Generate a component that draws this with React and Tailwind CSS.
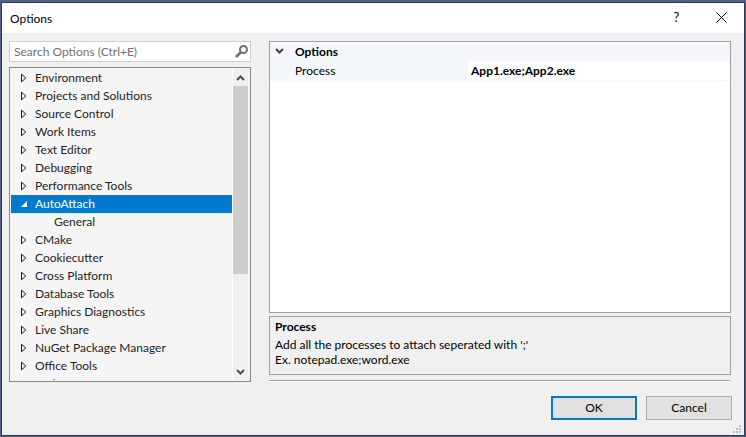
import React from "react";

const categories = [
  { name: "Environment" },
  { name: "Projects and Solutions" },
  { name: "Source Control" },
  { name: "Work Items" },
  { name: "Text Editor" },
  { name: "Debugging" },
  { name: "Performance Tools" },
  { name: "AutoAttach", selected: true, children: ["General"] },
  { name: "CMake" },
  { name: "Cookiecutter" },
  { name: "Cross Platform" },
  { name: "Database Tools" },
  { name: "Graphics Diagnostics" },
  { name: "Live Share" },
  { name: "NuGet Package Manager" },
  { name: "Office Tools" },
  { name: "Python" },
];

function Chevron({ up = false, className = "" }) {
  return (
    <svg width="9" height="6" viewBox="0 0 9 6" className={className} aria-hidden="true">
      <path d={up ? "M1 5 4.5 1.5 8 5" : "M1 1 4.5 4.5 8 1"} fill="none" stroke="currentColor" strokeWidth="2" />
    </svg>
  );
}

function Expander({ open }) {
  return (
    <svg width="7" height="10" viewBox="0 0 7 10" className="shrink-0" aria-hidden="true">
      {open ? (
        <path d="M6 2v6H0z" fill="#fff" />
      ) : (
        <path d="M.5 1.200v7.600L4.800 5z" fill="none" stroke="#1e1e1e" />
      )}
    </svg>
  );
}

function TreeItem({ item }) {
  return (
    <li>
      <button
        type="button"
        className={`flex h-[18px] w-full items-center gap-[7px] pl-[10px] text-left whitespace-nowrap ${
          item.selected ? "bg-[#007acc] text-white" : "text-[#1e1e1e]"
        }`}
      >
        <Expander open={item.selected} />
        <span className="pb-[2px]">{item.name}</span>
      </button>
      {item.children && (
        <ul>
          {item.children.map((child) => (
            <li key={child}>
              <button
                type="button"
                className="flex h-[18px] w-full items-center pb-[2px] pl-[43px] text-left text-[#1e1e1e]"
              >
                {child}
              </button>
            </li>
          ))}
        </ul>
      )}
    </li>
  );
}

function OptionsTree() {
  return (
    <nav aria-label="Option categories" className="flex min-h-0 flex-1 border border-[#828790] bg-[#f5f5f5] p-px">
      <ul className="min-w-0 flex-1 overflow-hidden">
        {categories.map((item) => (
          <TreeItem key={item.name} item={item} />
        ))}
      </ul>
      <div className="flex w-[17px] shrink-0 flex-col border-x border-l-white border-r-[#f5f5f5] bg-[#f0f0f0] text-[#505050]">
        <button type="button" aria-label="Scroll up" className="flex h-[17px] items-center justify-center">
          <Chevron up />
        </button>
        <div className="flex-1">
          <div className="h-[68%] bg-[#cdcdcd]" />
        </div>
        <button type="button" aria-label="Scroll down" className="flex h-[17px] items-center justify-center">
          <Chevron />
        </button>
      </div>
    </nav>
  );
}

function PropertyGrid() {
  return (
    <section className="min-h-0 flex-1 border border-[#a0a0a0] bg-white">
      <button type="button" className="flex h-5 w-full items-center bg-[#f4f7fc] pb-[2px] pl-[5px] font-bold">
        <span className="w-5">
          <Chevron className="text-[#404040]" />
        </span>
        Options
      </button>
      <div className="flex h-[19px] border-b border-[#f4f7fc]">
        <label htmlFor="process" className="w-[198px] bg-[#f4f7fc] pl-[25px] leading-[18px]">
          Process
        </label>
        <input
          id="process"
          type="text"
          defaultValue="App1.exe;App2.exe"
          className="min-w-0 flex-1 pb-[2px] pl-[3px] font-bold outline-none"
        />
      </div>
    </section>
  );
}

function ResizeGrip() {
  return (
    <svg width="8" height="8" viewBox="0 0 8 8" fill="#bfbfbf" className="absolute right-[3px] bottom-[2px]" aria-hidden="true">
      <path d="M6 0h2v2H6zM3 3h2v2H3zM6 3h2v2H6zM0 6h2v2H0zM3 6h2v2H3zM6 6h2v2H6z" />
    </svg>
  );
}

export default function App() {
  return (
    <div className="h-screen bg-[#535f8c] pt-[2px] pr-px pb-px pl-px font-[Lato,sans-serif] text-[12px] leading-[15px] text-black">
      <div className="relative flex h-full flex-col border border-[#2f3650] bg-[#f0f0f0]">
        <header className="flex h-[30px] shrink-0 items-center bg-white pl-2">
          <h1 className="flex-1">Options</h1>
          <button type="button" aria-label="Help" className="h-full w-[45px] pb-[2px] text-[13px]">
            ?
          </button>
          <button type="button" aria-label="Close" className="flex h-full w-[45px] items-center justify-center pb-[2px]">
            <svg width="11" height="11" viewBox="0 0 11 11" aria-hidden="true">
              <path d="M.5.5l10 10M10.500.5l-10 10" stroke="#000" fill="none" />
            </svg>
          </button>
        </header>

        <main className="flex min-h-0 flex-1 gap-[18px] pt-2 pr-[13px] pl-[7px]">
          <div className="flex w-[242px] shrink-0 flex-col gap-[5px]">
            <div className="flex h-[21px] shrink-0 items-center border border-[#cccedb] bg-white pr-[2px] pl-1">
              <input
                type="search"
                aria-label="Search Options"
                placeholder="Search Options (Ctrl+E)"
                className="min-w-0 flex-1 outline-none placeholder:text-[#717171]"
              />
              <svg width="13" height="13" viewBox="0 0 13 13" fill="none" stroke="#717171" aria-hidden="true">
                <circle cx="8.500" cy="4.500" r="3.500" strokeWidth="2" />
                <path d="M6 7 1 12" strokeWidth="2.600" />
              </svg>
            </div>
            <OptionsTree />
          </div>

          <div className="flex min-w-0 flex-1 flex-col">
            <PropertyGrid />
            <section className="mt-[3px] h-[59px] shrink-0 border border-[#a0a0a0] px-[5px] pt-[2px]">
              <h2 className="mb-[3px] font-bold">Process</h2>
              <p>Add all the processes to attach seperated with &#39;;&#39;</p>
              <p>Ex. notepad.exe;word.exe</p>
            </section>
            <div className="mt-[5px] mr-px h-[2px] border-t border-b border-t-[#a0a0a0] border-b-white" />
          </div>
        </main>

        <footer className="flex shrink-0 justify-end gap-[9px] pt-[14px] pr-3 pb-[15px]">
          <button type="button" className="h-6 w-[86px] border-2 border-[#0078d7] bg-[#e1e1e1] pb-[2px]">
            OK
          </button>
          <button type="button" className="h-6 w-[86px] border border-[#adadad] bg-[#e1e1e1] pb-[2px]">
            Cancel
          </button>
        </footer>
        <ResizeGrip />
      </div>
    </div>
  );
}
